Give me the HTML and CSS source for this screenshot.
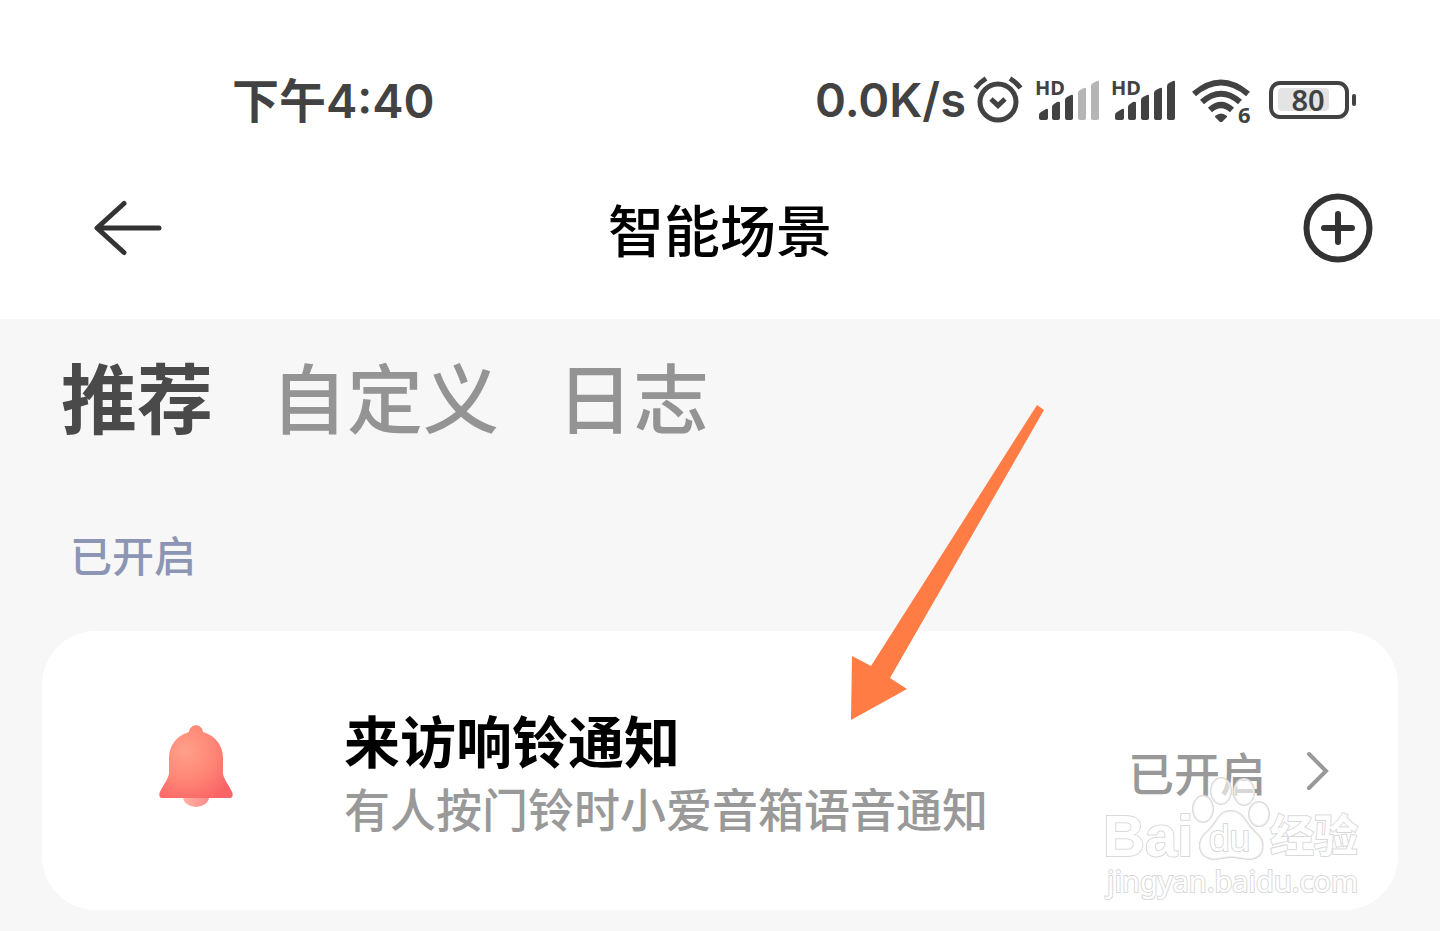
FILE: index.html
```html
<!DOCTYPE html>
<html lang="zh-Hans">
<head>
  <meta charset="UTF-8">
  <meta name="viewport" content="width=device-width, initial-scale=1">
  <title>智能场景</title>
  <link rel="stylesheet" href="styles.css">
</head>
<body>
  <header>
    <div class="status-bar">
      <span class="time">下午4:40</span>
      <div class="status-icons">
        <span class="speed">0.0K/s</span>
        <svg class="alarm" width="50" height="48" viewBox="0 0 50 48" fill="none" stroke="#424242">
          <circle cx="24" cy="26" r="18" stroke-width="5"/>
          <path d="M17 23l7 6.500 7-6.500" stroke-width="5"/>
          <path d="M1.500 12C4.500 8 8 5 12 2.500M46.500 12C43.500 8 40 5 36 2.500" stroke-width="5"/>
        </svg>
        <svg class="signal" width="64" height="48" viewBox="0 0 64 48" fill="#424242">
          <text x="-1" y="19">HD</text>
          <path d="M3 39q0-2 2-3l5-3q2-1 2 1v8q0 2-2 2H5q-2 0-2-2z"/>
          <path d="M16 31q0-2 2-3l3-2q3-1 3 1v15q0 2-2 2h-4q-2 0-2-2z"/>
          <path d="M29 24q0-2 2-3l4-2q2-1 2 1v22q0 2-2 2h-4q-2 0-2-2z"/>
          <path class="off" d="M42 17q0-2 2-3l4-2q2-1 2 1v29q0 2-2 2h-4q-2 0-2-2z"/>
          <path class="off" d="M55 10q0-2 2-3l4-2q2-1 2 1v36q0 2-2 2h-4q-2 0-2-2z"/>
        </svg>
        <svg class="signal" width="64" height="48" viewBox="0 0 64 48" fill="#424242">
          <text x="-1" y="19">HD</text>
          <path d="M3 39q0-2 2-3l5-3q2-1 2 1v8q0 2-2 2H5q-2 0-2-2z"/>
          <path d="M16 31q0-2 2-3l3-2q3-1 3 1v15q0 2-2 2h-4q-2 0-2-2z"/>
          <path d="M29 24q0-2 2-3l4-2q2-1 2 1v22q0 2-2 2h-4q-2 0-2-2z"/>
          <path d="M42 17q0-2 2-3l4-2q2-1 2 1v29q0 2-2 2h-4q-2 0-2-2z"/>
          <path d="M55 10q0-2 2-3l4-2q2-1 2 1v36q0 2-2 2h-4q-2 0-2-2z"/>
        </svg>
        <svg class="wifi" width="60" height="48" viewBox="0 0 60 48" fill="none" stroke="#424242" stroke-width="6">
          <path d="M2 18Q29-5 56 18"/>
          <path d="M10 26Q29 9.500 48 26"/>
          <path d="M18 34Q29 24 40 34"/>
          <path d="M23 40q6-5 12 0v1l-5 5h-2l-5-5z" fill="#424242" stroke="none"/>
          <text x="46" y="47">6</text>
        </svg>
        <svg class="battery" width="90" height="48" viewBox="0 0 90 48">
          <rect x="3" y="7" width="76" height="34" rx="9" fill="none" stroke="#424242" stroke-width="4"/>
          <rect x="10" y="12" width="51" height="23" rx="4" fill="#e4e4e4"/>
          <rect x="84" y="18" width="4" height="12" rx="2" fill="#424242"/>
          <text x="40" y="35" text-anchor="middle">80</text>
        </svg>
      </div>
    </div>

    <div class="nav">
      <button class="icon-btn back" aria-label="返回">
        <svg width="72" height="72" viewBox="0 0 72 72" fill="none" stroke="#333" stroke-width="5" stroke-linecap="round" stroke-linejoin="round">
          <path d="M67 36H6M32 11.500L5 36l27 24.500"/>
        </svg>
      </button>
      <h1>智能场景</h1>
      <button class="icon-btn add" aria-label="添加">
        <svg width="72" height="72" viewBox="0 0 72 72" fill="none" stroke="#333" stroke-width="6" stroke-linecap="round">
          <circle cx="36" cy="36" r="31.500"/>
          <path d="M22 36h28M36 22v28"/>
        </svg>
      </button>
    </div>
  </header>

  <main>
    <nav class="tabs">
      <a class="active" href="#recommend">推荐</a>
      <a href="#custom">自定义</a>
      <a href="#log">日志</a>
    </nav>

    <h2>已开启</h2>

    <div class="card">
      <svg class="bell" width="76" height="86" viewBox="0 0 76 86">
        <defs>
          <radialGradient id="bellBody" cx=".35" cy=".35" r=".75">
            <stop offset="0" stop-color="#ffa08a"/>
            <stop offset=".55" stop-color="#ff8575"/>
            <stop offset="1" stop-color="#f96466"/>
          </radialGradient>
          <linearGradient id="bellClapper">
            <stop offset="0" stop-color="#ffb3a5"/>
            <stop offset="1" stop-color="#ff8a8a"/>
          </linearGradient>
        </defs>
        <path d="M25 73a13 10 0 0 0 26 0z" fill="url(#bellClapper)"/>
        <path d="M31 8c1-9 13-9 14 0 13 4 20 14 20 26v15c0 5 6 12 9.500 20q1 5-3.500 5H5q-4.500 0-3.500-5C5 61 11 54 11 49V34C11 22 18 12 31 8z" fill="url(#bellBody)"/>
      </svg>
      <div class="info">
        <h3>来访响铃通知</h3>
        <p>有人按门铃时小爱音箱语音通知</p>
      </div>
      <a class="state" href="#detail">
        <span>已开启</span>
        <svg width="24" height="42" viewBox="0 0 24 42" fill="none" stroke="#999" stroke-width="4" stroke-linecap="round">
          <path d="M3 4l17 17L3 38"/>
        </svg>
      </a>

      <svg class="pointer" width="194" height="316" viewBox="0 0 194 316">
        <path d="M0 315L1 251l19 10L186 0l7 5L39 273l17 11z" fill="#ff7c44"/>
      </svg>

      <svg class="watermark" width="264" height="130" viewBox="0 0 264 130">
        <g class="paw">
          <ellipse cx="101" cy="35" rx="10" ry="13"/>
          <ellipse cx="119" cy="17" rx="10" ry="13"/>
          <ellipse cx="142" cy="18" rx="10" ry="13"/>
          <ellipse cx="157" cy="40" rx="10" ry="12"/>
          <path d="M129 37c-13 0-14 12-23 20-12 9-11 26 5 28 8 0 11-2 18-2s12 2 20 2c14-2 15-18 5-26-10-8-12-22-25-22z"/>
        </g>
        <text class="logo" x="1" y="82">Bai</text>
        <text class="du" x="107" y="77">du</text>
        <text class="logo-cn" x="168" y="78">经验</text>
        <text class="site" x="5" y="118">jingyan.baidu.com</text>
      </svg>
    </div>
  </main>
</body>
</html>
```
FILE: styles.css
```css
* {
  box-sizing: border-box;
}
body {
  margin: 0;
  min-height: 100vh;
  font-family: "Noto Sans CJK SC", sans-serif;
  font-weight: 500;
  background-color: #f7f7f7;
  color: #000;
}
h1, h2, h3, p {
  margin: 0;
}
a {
  color: inherit;
  text-decoration: none;
}
svg {
  display: block;
  flex-shrink: 0;
  overflow: visible;
}
header {
  background-color: #fff;
}
.status-bar {
  display: flex;
  justify-content: space-between;
  align-items: center;
  padding: 64px 82px 0 232px;
  height: 136px;
  font-family: Inter, "Noto Sans CJK SC", sans-serif;
  font-size: 47px;
  font-weight: 600;
  line-height: 72px;
  color: #424242;
}
.time {
  padding-top: 2px;
}
.status-icons {
  display: flex;
  align-items: center;
  gap: 12px;
}
.speed {
  margin-right: -4px;
}
.status-icons text {
  fill: #424242;
  stroke: none;
  font-family: "Noto Sans", sans-serif;
  font-weight: 700;
}
.signal text {
  font-size: 20px;
}
.signal .off {
  fill: #b5b5b5;
}
.wifi, .battery {
  margin-left: 4px;
}
.wifi text {
  font-size: 22px;
}
.battery text {
  font-size: 29px;
  font-weight: 600;
}
.nav {
  display: grid;
  grid-template-columns: 1fr auto 1fr;
  align-items: center;
  height: 183px;
  padding: 0 66px;
}
.nav h1 {
  font-size: 56px;
  line-height: 80px;
  font-weight: 500;
}
.icon-btn {
  padding: 0;
  border: none;
  background: none;
  cursor: pointer;
}
.back {
  justify-self: start;
  padding-left: 26px;
}
.add {
  justify-self: end;
}
main {
  padding: 26px 42px 21px;
}
.tabs {
  display: flex;
  gap: 58px;
  padding-left: 19px;
  font-size: 76px;
  line-height: 100px;
  color: #949494;
}
.tabs .active {
  font-weight: 700;
  color: #4a4a4a;
}
h2 {
  margin: 78px 0 46px 28px;
  font-size: 42px;
  line-height: 62px;
  font-weight: 500;
  color: #8c95b3;
}
.card {
  position: relative;
  display: flex;
  align-items: center;
  min-height: 279px;
  padding: 0 68px 0 116px;
  border-radius: 54px;
  background-color: #fff;
}
.bell {
  margin-bottom: 8px;
}
.info {
  flex: 1;
  margin-left: 110px;
  padding-bottom: 4px;
}
.info h3 {
  font-size: 56px;
  line-height: 76px;
  font-weight: 700;
}
.info p {
  font-size: 46px;
  line-height: 60px;
  color: #999;
}
.state {
  display: flex;
  align-items: center;
  gap: 40px;
  font-size: 46px;
  line-height: 60px;
  color: #999;
}
/* arrow lying over the page, tip on the card */
.pointer {
  position: absolute;
  right: 353px;
  top: -226px;
}
.watermark {
  position: absolute;
  right: 32px;
  bottom: 6px;
  fill: #fff;
  stroke: #d9d9d9;
  stroke-width: 2px;
  paint-order: stroke;
}
.watermark .paw {
  fill-opacity: 0.6;
}
.watermark .logo {
  font: 700 58px "Liberation Sans", sans-serif;
}
.watermark .du {
  font: 400 37px "Liberation Sans", sans-serif;
}
.watermark .logo-cn {
  font-size: 44px;
  font-weight: 700;
}
.watermark .site {
  font: 400 29px "Noto Sans", sans-serif;
}
```
